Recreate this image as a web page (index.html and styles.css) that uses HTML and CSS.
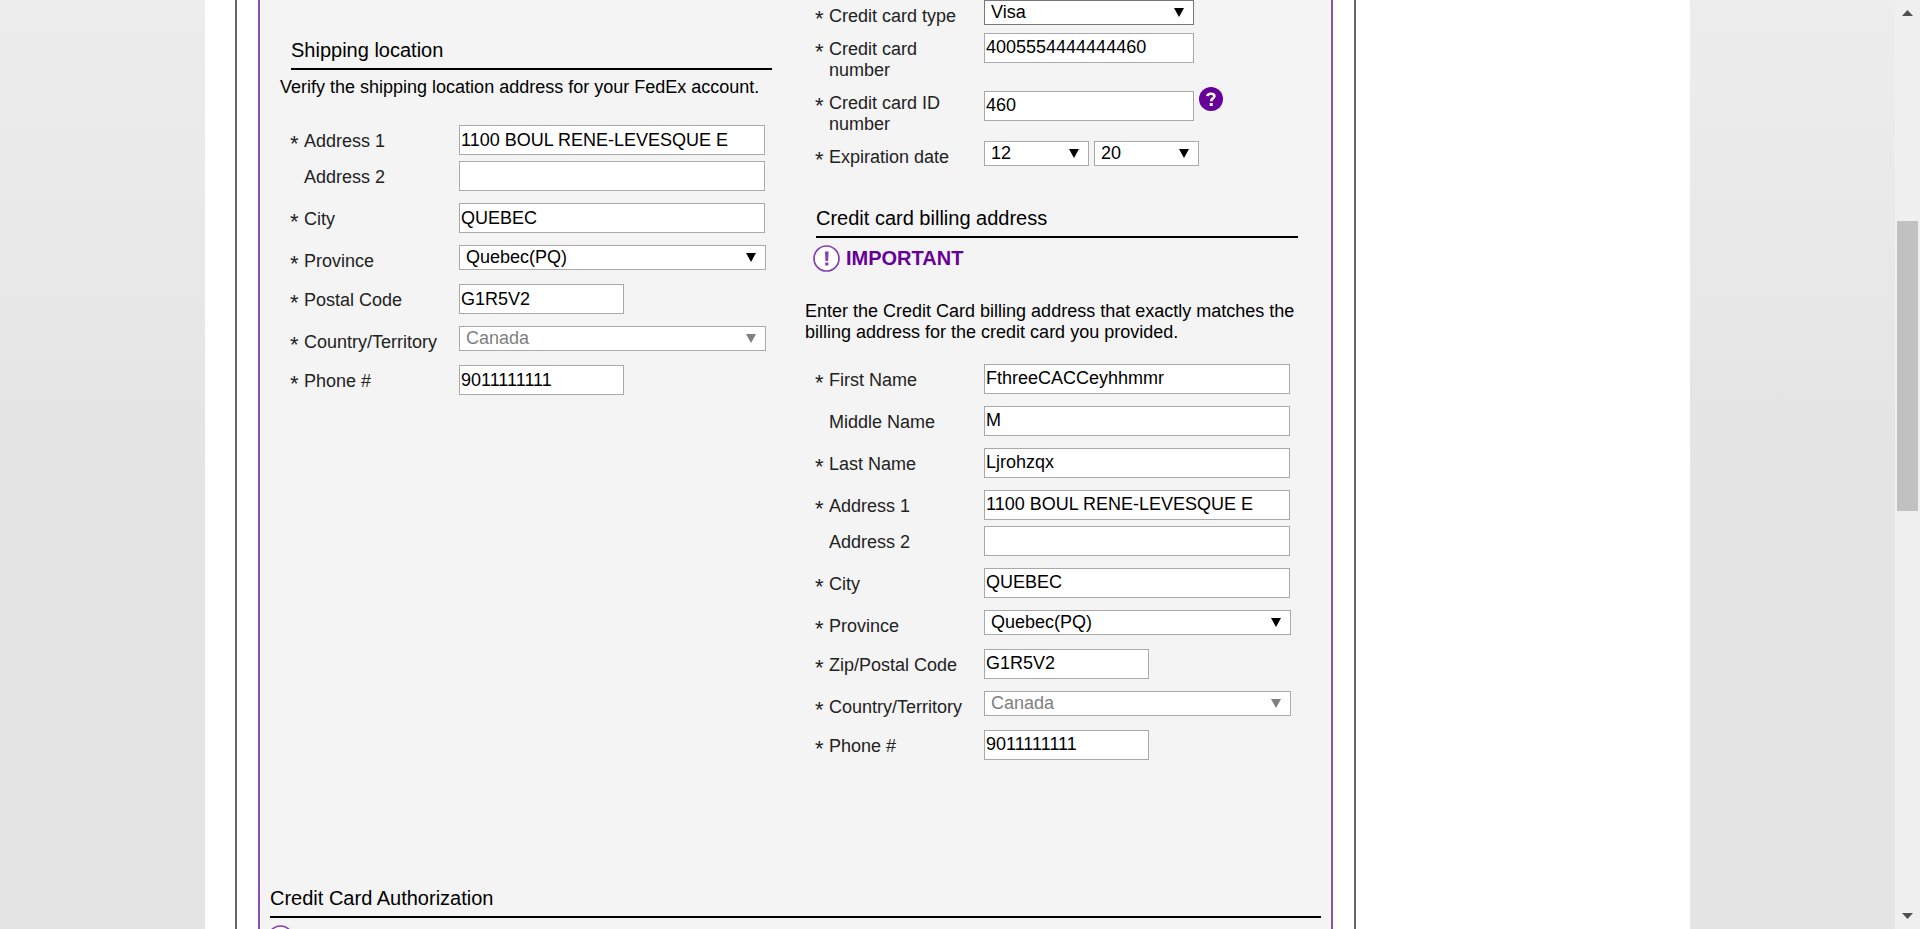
FILE: index.html
```html
<!DOCTYPE html>
<html lang="en">
<head>
<meta charset="utf-8">
<title>Account registration</title>
<link rel="stylesheet" href="styles.css">
</head>
<body>
<div class="viewport">
  <div class="page">
    <div class="frame">
      <main class="panel">
        <div class="columns">
          <section class="column column-shipping">
            <h2 class="heading">Shipping location</h2>
            <p class="intro">Verify the shipping location address for your FedEx account.</p>
            <form class="form">
              <div class="row tight"><label for="s-address1"><span class="req">*</span>Address 1</label><input class="text" id="s-address1" type="text" value="1100 BOUL RENE-LEVESQUE E"></div>
              <div class="row"><label for="s-address2"><span class="req"></span>Address 2</label><input class="text" id="s-address2" type="text"></div>
              <div class="row"><label for="s-city"><span class="req">*</span>City</label><input class="text" id="s-city" type="text" value="QUEBEC"></div>
              <div class="row"><label for="s-province"><span class="req">*</span>Province</label><span class="drop"><select id="s-province"><option>Quebec(PQ)</option></select></span></div>
              <div class="row"><label for="s-postal"><span class="req">*</span>Postal Code</label><input class="text short" id="s-postal" type="text" value="G1R5V2"></div>
              <div class="row"><label for="s-country"><span class="req">*</span>Country/Territory</label><span class="drop disabled"><select id="s-country" disabled><option>Canada</option></select></span></div>
              <div class="row"><label for="s-phone"><span class="req">*</span>Phone #</label><input class="text short" id="s-phone" type="text" value="9011111111"></div>
            </form>
          </section>

          <section class="column column-billing">
            <form class="form payment">
              <div class="row"><label for="c-type"><span class="req">*</span>Credit card type</label><span class="drop medium strong"><select id="c-type"><option>Visa</option></select></span></div>
              <div class="row"><label for="c-number"><span class="req">*</span>Credit card number</label><input class="text medium" id="c-number" type="text" value="4005554444444460"></div>
              <div class="row"><label for="c-id"><span class="req">*</span>Credit card ID number</label>
                <span class="with-help">
                  <input class="text medium" id="c-id" type="text" value="460">
                  <button class="help" type="button" aria-label="Help">
                    <svg viewBox="0 0 24 24" width="24" height="24"><circle cx="12" cy="12" r="12" fill="#609"/><path d="M8.400 9.200C8.600 7.300 10 6.800 12 6.800c2 0 3.400.8 3.400 2.400 0 2.200-3.200 2.100-3.200 5" fill="none" stroke="#fff" stroke-width="2.600"/><rect x="10.700" y="16" width="3" height="3" fill="#fff"/></svg>
                  </button>
                </span>
              </div>
              <div class="row"><label for="c-month"><span class="req">*</span>Expiration date</label>
                <span class="pair">
                  <span class="drop small"><select id="c-month"><option>12</option></select></span>
                  <span class="drop small"><select aria-label="Expiration year"><option>20</option></select></span>
                </span>
              </div>
            </form>
            <h2 class="heading heading-billing">Credit card billing address</h2>
            <div class="important">
              <svg viewBox="0 0 27 27" width="27" height="27"><circle cx="13.5" cy="13.5" r="12.5" fill="#fff" stroke="#8440b0" stroke-width="1.700"/><path d="M12 6.500h3.600l-.5 9.500h-2.600z" fill="#8440b0"/><rect x="12.200" y="17.500" width="3.200" height="3" fill="#8440b0"/></svg>
              <strong>IMPORTANT</strong>
            </div>
            <p class="intro intro-billing">Enter the Credit Card billing address that exactly matches the billing address for the credit card you provided.</p>
            <form class="form billing">
              <div class="row"><label for="b-first"><span class="req">*</span>First Name</label><input class="text" id="b-first" type="text" value="FthreeCACCeyhhmmr"></div>
              <div class="row"><label for="b-middle"><span class="req"></span>Middle Name</label><input class="text" id="b-middle" type="text" value="M"></div>
              <div class="row"><label for="b-last"><span class="req">*</span>Last Name</label><input class="text" id="b-last" type="text" value="Ljrohzqx"></div>
              <div class="row tight"><label for="b-address1"><span class="req">*</span>Address 1</label><input class="text" id="b-address1" type="text" value="1100 BOUL RENE-LEVESQUE E"></div>
              <div class="row"><label for="b-address2"><span class="req"></span>Address 2</label><input class="text" id="b-address2" type="text"></div>
              <div class="row"><label for="b-city"><span class="req">*</span>City</label><input class="text" id="b-city" type="text" value="QUEBEC"></div>
              <div class="row"><label for="b-province"><span class="req">*</span>Province</label><span class="drop"><select id="b-province"><option>Quebec(PQ)</option></select></span></div>
              <div class="row"><label for="b-postal"><span class="req">*</span>Zip/Postal Code</label><input class="text short" id="b-postal" type="text" value="G1R5V2"></div>
              <div class="row"><label for="b-country"><span class="req">*</span>Country/Territory</label><span class="drop disabled"><select id="b-country" disabled><option>Canada</option></select></span></div>
              <div class="row"><label for="b-phone"><span class="req">*</span>Phone #</label><input class="text short" id="b-phone" type="text" value="9011111111"></div>
            </form>
          </section>
        </div>

        <section class="authorization">
          <h2 class="heading heading-wide">Credit Card Authorization</h2>
          <svg class="notice" viewBox="0 0 27 27" width="27" height="27"><circle cx="13.5" cy="13.5" r="12.5" fill="#fff" stroke="#8440b0" stroke-width="1.700"/><path d="M12 6.500h3.600l-.5 9.500h-2.600z" fill="#8440b0"/><rect x="12.200" y="17.500" width="3.200" height="3" fill="#8440b0"/></svg>
        </section>
      </main>
    </div>
  </div>
</div>
<div class="scrollbar" aria-hidden="true">
  <svg class="arrow" viewBox="0 0 11 6" width="11" height="6"><path d="M5.5 0L11 6H0z" fill="#505050"/></svg>
  <div class="track"><div class="thumb"></div></div>
  <svg class="arrow" viewBox="0 0 11 6" width="11" height="6"><path d="M0 0h11L5.500 6z" fill="#505050"/></svg>
</div>
</body>
</html>
```

FILE: styles.css
```css
* {
  box-sizing: border-box;
}

body {
  margin: 0;
  height: 100vh;
  overflow: hidden;
  display: flex;
  font-family: "Liberation Sans", Arial, sans-serif;
  font-size: 18px;
  line-height: 21px;
  color: #000;
}

.viewport {
  flex: 1;
  min-width: 0;
  overflow: hidden;
  background: linear-gradient(#ededed, #e4e4e4 480px, #e4e4e4);
}

.page {
  max-width: 1485px;
  min-height: 100vh;
  margin: 0 auto;
  padding-left: 30px;
  background: #fff;
}

.frame {
  max-width: 1121px;
  padding: 0 21px;
  border: solid #666;
  border-width: 0 2px;
}

.panel {
  padding: 0 10px;
  border: solid #8e4fae;
  border-width: 0 2px;
  background: #f4f4f4;
}

.columns {
  display: grid;
  grid-template-columns: 525fr 526fr;
}

.column {
  padding: 0 10px;
}

.column-shipping {
  padding-top: 39px;
}

.heading {
  margin: 0 13px 0 11px;
  padding-bottom: 6px;
  border-bottom: 2px solid #000;
  font-size: 20px;
  font-weight: 400;
  line-height: 23px;
}

.heading-billing {
  margin-top: 39px;
}

.heading-wide {
  margin: 0;
}

.intro {
  margin: 7px 0 27px;
}

.intro-billing {
  margin: 29px 0 21px;
}

.form {
  display: flex;
  flex-direction: column;
  gap: 12px;
  margin-left: 10px;
}

.payment {
  gap: 6px;
}

.row {
  display: grid;
  grid-template-columns: 169px 1fr;
  align-items: start;
  min-height: 27px;
}

.tight {
  margin-bottom: -6px;
}

label {
  position: relative;
  padding: 6px 24px 0 14px;
  color: #222;
}

.billing label,
.column-shipping label {
  padding-right: 0;
}

.req {
  position: absolute;
  left: 0;
  font-size: 22px;
  line-height: 25px;
}

.text {
  width: 306px;
  height: 30px;
  padding: 0 1px;
  border: 1px solid #a9a9a9;
  background: #fff;
  color: #000;
  font: inherit;
}

.billing .text,
.payment .text {
  padding-bottom: 2px;
}

.text.short {
  width: 165px;
}

.text.medium {
  width: 210px;
}

.drop {
  position: relative;
  width: 307px;
}

.drop::after {
  content: "";
  position: absolute;
  top: 8px;
  right: 10px;
  width: 10px;
  height: 9px;
  background: #000;
  clip-path: polygon(0 0, 100% 0, 50% 100%);
  pointer-events: none;
}

.drop.medium {
  width: 210px;
}

.drop.small {
  width: 105px;
}

.drop select {
  appearance: none;
  display: block;
  width: 100%;
  height: 25px;
  padding: 0 24px 0 6px;
  border: 1px solid #a9a9a9;
  border-radius: 0;
  background: #fff;
  color: #000;
  font: inherit;
  line-height: 23px;
}

.drop.strong select {
  border-color: #777;
}

.drop.disabled select {
  color: #808080;
  opacity: 1;
}

.drop.disabled::after {
  background: #808080;
}

.with-help {
  display: flex;
  align-items: start;
  gap: 5px;
}

.with-help .text {
  margin-top: 4px;
}

.help {
  padding: 0;
  border: 0;
  background: none;
  line-height: 0;
}

.pair {
  display: flex;
  gap: 5px;
}

.important {
  display: flex;
  align-items: center;
  gap: 6px;
  margin: 7px 0 0 8px;
  color: #609;
  font-size: 20px;
}

.authorization {
  margin-top: 127px;
}

.notice {
  display: block;
  margin: 7px 0 0 -3px;
}

.scrollbar {
  display: flex;
  flex-direction: column;
  align-items: center;
  width: 25px;
  padding: 10px 2px;
  background: #f0f0f0;
}

.track {
  flex: 1;
  width: 21px;
  padding-top: 205px;
}

.thumb {
  height: 290px;
  background: #c1c1c1;
}
```
